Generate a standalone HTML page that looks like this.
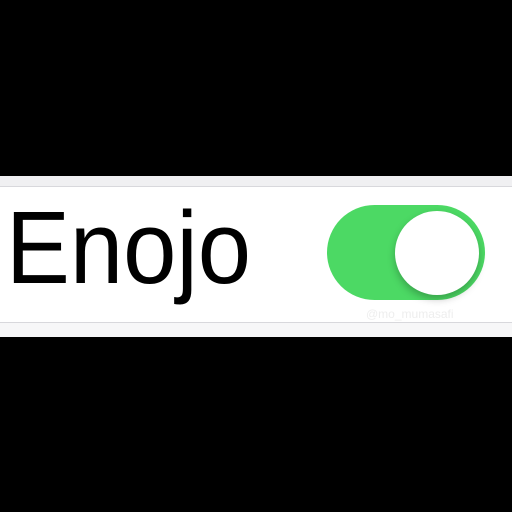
<!DOCTYPE html>
<html><head><style>
html,body{margin:0;padding:0;width:512px;height:512px;background:#000;overflow:hidden;position:relative}
.band{position:absolute;left:0;top:176px;width:512px;height:160px;background:#fff}
.top{position:absolute;left:0;top:176px;width:512px;height:10px;background:#f0f0f2;border-bottom:1px solid #d8d8dc}
.bot{position:absolute;left:0;top:322px;width:512px;height:14px;background:#f7f7f8;border-top:1px solid #d8d8dc}
.txt{position:absolute;left:6px;top:188px;font-family:"Liberation Sans",sans-serif;font-size:103px;line-height:120px;color:#000;transform:scaleX(0.93);transform-origin:0 0}
.tog{position:absolute;left:327px;top:205px;width:158px;height:95px;border-radius:48px;background:#4cd964}
.knob{position:absolute;left:395px;top:211px;width:84px;height:84px;border-radius:50%;background:#fff;box-shadow:0 4px 8px rgba(0,0,0,.25)}
.wm{position:absolute;left:366px;top:307px;font-family:"Liberation Sans",sans-serif;font-size:12px;color:#eee}
</style></head><body>
<div class="band"></div><div class="top"></div><div class="bot"></div>
<div class="txt">Enojo</div>
<div class="tog"></div><div class="knob"></div>
<div class="wm">@mo_mumasafi</div>
</body></html>
